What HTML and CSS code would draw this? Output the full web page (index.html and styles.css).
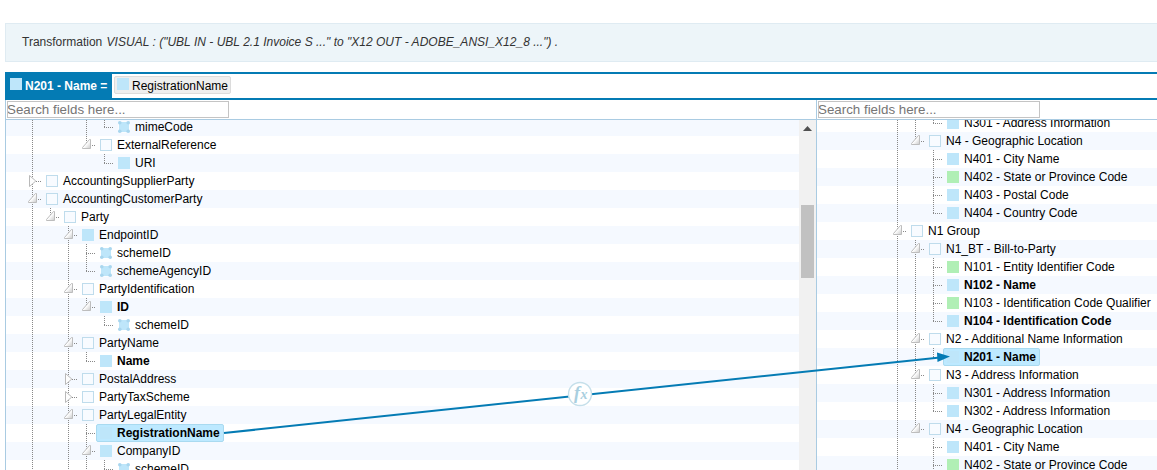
FILE: index.html
```html
<!DOCTYPE html>
<html lang="en">
<head>
<meta charset="utf-8">
<title>Transformation mapper</title>
<link rel="stylesheet" href="styles.css">
</head>
<body>
<svg class="defs" aria-hidden="true">
  <defs>
    <linearGradient id="shade" x1="0" y1="0" x2="1" y2="1"><stop offset=".5" stop-color="#fff"/><stop offset="1" stop-color="#c8c8c8"/></linearGradient>
    <symbol id="open" viewBox="0 0 12 12"><path d="M8.5 1.5h1v9h-8v-1z" fill="url(#shade)" stroke="#bdbdbd" stroke-linejoin="round"/></symbol>
    <symbol id="closed" viewBox="0 0 12 12"><path d="M2.5.5L8.8 6 2.5 11.5z" fill="#fdfdfd" stroke="#b9b9b9" stroke-linejoin="round"/></symbol>
    <symbol id="attr" viewBox="0 0 12 12"><path d="M1 1h10v10H1z" fill="#bee6fa"/><path d="M4 0h4v1H4zM4 11h4v1H4zM0 4h1v4H0zM11 4h1v4h-1z" fill="#fff" opacity=".6"/><g fill="#a9d6ee"><circle cx="1.8" cy="1.8" r="1.8"/><circle cx="10.2" cy="1.8" r="1.8"/><circle cx="1.8" cy="10.2" r="1.8"/><circle cx="10.2" cy="10.2" r="1.8"/></g></symbol>
  </defs>
</svg>
<div class="banner">Transformation <em>VISUAL : ("UBL IN - UBL 2.1 Invoice S ..." to "X12 OUT - ADOBE_ANSI_X12_8 ...") .</em></div>
<div class="formula">
  <div class="target"><b class="ic leaf"></b><span>N201 - Name =</span></div>
  <div class="token"><b class="ic leaf"></b><span>RegistrationName</span></div>
</div>
<main class="mapper">
  <section class="pane source">
    <div class="search"><input type="text" placeholder="Search fields here..."></div>
    <div class="view">
      <div class="tree">
        <div class="row"><i class="v"></i><i></i><i></i><i class="v"></i><i class="l"></i><svg class="ic"><use href="#attr"/></svg><span>mimeCode</span></div>
        <div class="row"><i class="v"></i><i></i><i></i><i class="up x"><svg><use href="#open"/></svg></i><b class="ic group"></b><span>ExternalReference</span></div>
        <div class="row"><i class="v"></i><i></i><i></i><i></i><i class="l"></i><b class="ic leaf"></b><span>URI</span></div>
        <div class="row"><i class="v x"><svg><use href="#closed"/></svg></i><b class="ic group"></b><span>AccountingSupplierParty</span></div>
        <div class="row"><i class="v x"><svg><use href="#open"/></svg></i><b class="ic group"></b><span>AccountingCustomerParty</span></div>
        <div class="row"><i class="v"></i><i class="up x"><svg><use href="#open"/></svg></i><b class="ic group"></b><span>Party</span></div>
        <div class="row"><i class="v"></i><i></i><i class="v x"><svg><use href="#open"/></svg></i><b class="ic leaf"></b><span>EndpointID</span></div>
        <div class="row"><i class="v"></i><i></i><i class="v"></i><i class="v t"></i><svg class="ic"><use href="#attr"/></svg><span>schemeID</span></div>
        <div class="row"><i class="v"></i><i></i><i class="v"></i><i class="l"></i><svg class="ic"><use href="#attr"/></svg><span>schemeAgencyID</span></div>
        <div class="row"><i class="v"></i><i></i><i class="v x"><svg><use href="#open"/></svg></i><b class="ic group"></b><span>PartyIdentification</span></div>
        <div class="row mapped"><i class="v"></i><i></i><i class="v"></i><i class="up x"><svg><use href="#open"/></svg></i><b class="ic leaf"></b><span>ID</span></div>
        <div class="row"><i class="v"></i><i></i><i class="v"></i><i></i><i class="l"></i><svg class="ic"><use href="#attr"/></svg><span>schemeID</span></div>
        <div class="row"><i class="v"></i><i></i><i class="v x"><svg><use href="#open"/></svg></i><b class="ic group"></b><span>PartyName</span></div>
        <div class="row mapped"><i class="v"></i><i></i><i class="v"></i><i class="l"></i><b class="ic leaf"></b><span>Name</span></div>
        <div class="row"><i class="v"></i><i></i><i class="v x"><svg><use href="#closed"/></svg></i><b class="ic group"></b><span>PostalAddress</span></div>
        <div class="row"><i class="v"></i><i></i><i class="v x"><svg><use href="#closed"/></svg></i><b class="ic group"></b><span>PartyTaxScheme</span></div>
        <div class="row"><i class="v"></i><i></i><i class="v x"><svg><use href="#open"/></svg></i><b class="ic group"></b><span>PartyLegalEntity</span></div>
        <div class="row mapped"><i class="v"></i><i></i><i class="v"></i><i class="v t"></i><div class="selected"><b class="ic leaf"></b><span>RegistrationName</span></div></div>
        <div class="row"><i class="v"></i><i></i><i class="v"></i><i class="v x"><svg><use href="#open"/></svg></i><b class="ic leaf"></b><span>CompanyID</span></div>
        <div class="row"><i class="v"></i><i></i><i class="v"></i><i class="v"></i><i class="l"></i><svg class="ic"><use href="#attr"/></svg><span>schemeID</span></div>
      </div>
      <div class="scrollbar"><div class="arrow"></div><div class="thumb"></div></div>
    </div>
  </section>
  <section class="pane dest">
    <div class="search"><input type="text" placeholder="Search fields here..."></div>
    <div class="view">
      <div class="tree">
        <div class="row"><i class="v"></i><i class="v"></i><i class="l"></i><b class="ic leaf"></b><span>N301 - Address Information</span></div>
        <div class="row"><i class="v"></i><i class="up x"><svg><use href="#open"/></svg></i><b class="ic group"></b><span>N4 - Geographic Location</span></div>
        <div class="row"><i class="v"></i><i></i><i class="v t"></i><b class="ic leaf"></b><span>N401 - City Name</span></div>
        <div class="row"><i class="v"></i><i></i><i class="v t"></i><b class="ic code"></b><span>N402 - State or Province Code</span></div>
        <div class="row"><i class="v"></i><i></i><i class="v t"></i><b class="ic leaf"></b><span>N403 - Postal Code</span></div>
        <div class="row"><i class="v"></i><i></i><i class="l"></i><b class="ic leaf"></b><span>N404 - Country Code</span></div>
        <div class="row"><i class="v x"><svg><use href="#open"/></svg></i><b class="ic group"></b><span>N1 Group</span></div>
        <div class="row"><i class="v"></i><i class="v x"><svg><use href="#open"/></svg></i><b class="ic group"></b><span>N1_BT - Bill-to-Party</span></div>
        <div class="row"><i class="v"></i><i class="v"></i><i class="v t"></i><b class="ic code"></b><span>N101 - Entity Identifier Code</span></div>
        <div class="row mapped"><i class="v"></i><i class="v"></i><i class="v t"></i><b class="ic leaf"></b><span>N102 - Name</span></div>
        <div class="row"><i class="v"></i><i class="v"></i><i class="v t"></i><b class="ic code"></b><span>N103 - Identification Code Qualifier</span></div>
        <div class="row mapped"><i class="v"></i><i class="v"></i><i class="l"></i><b class="ic leaf"></b><span>N104 - Identification Code</span></div>
        <div class="row"><i class="v"></i><i class="v x"><svg><use href="#open"/></svg></i><b class="ic group"></b><span>N2 - Additional Name Information</span></div>
        <div class="row mapped"><i class="v"></i><i class="v"></i><i class="l"></i><div class="selected"><b class="ic leaf"></b><span>N201 - Name</span></div></div>
        <div class="row"><i class="v"></i><i class="v x"><svg><use href="#open"/></svg></i><b class="ic group"></b><span>N3 - Address Information</span></div>
        <div class="row"><i class="v"></i><i class="v"></i><i class="v t"></i><b class="ic leaf"></b><span>N301 - Address Information</span></div>
        <div class="row"><i class="v"></i><i class="v"></i><i class="l"></i><b class="ic leaf"></b><span>N302 - Address Information</span></div>
        <div class="row"><i class="v"></i><i class="up x"><svg><use href="#open"/></svg></i><b class="ic group"></b><span>N4 - Geographic Location</span></div>
        <div class="row"><i class="v"></i><i></i><i class="v t"></i><b class="ic leaf"></b><span>N401 - City Name</span></div>
        <div class="row"><i class="v"></i><i></i><i class="v t"></i><b class="ic code"></b><span>N402 - State or Province Code</span></div>
      </div>
    </div>
  </section>
</main>
<svg class="links" width="1157" height="470" viewBox="0 0 1157 470">
  <path d="M224 433L940 357.5" stroke="#047bb4" stroke-width="2" fill="none"/>
  <path d="M937 352.5L950 356.5 937.5 362z" fill="#047bb4"/>
  <circle cx="580" cy="394" r="11.5" fill="#fff" stroke="#c5dfea" stroke-width="1.4"/>
  <text class="fx" x="574" y="399">f<tspan class="fx-x" dx="0.5">x</tspan></text>
</svg>
</body>
</html>
```
FILE: styles.css
```css
* { box-sizing: border-box; }
body {
  margin: 0;
  padding: 23px 0 0 5px;
  width: 1157px;
  height: 470px;
  overflow: hidden;
  display: flex;
  flex-direction: column;
  position: relative;
  background: #fff;
  color: #000;
  font: 12px/18px "Liberation Sans", Arial, sans-serif;
}
.defs { position: absolute; width: 0; height: 0; }
.banner {
  flex: none;
  height: 39px;
  padding: 9px 16px;
  border: 1px solid #dfebf2;
  border-right: 0;
  background: #edf5f9;
  color: #333;
}
.banner em { margin-left: 1px; letter-spacing: 0.01px; }
.formula {
  flex: none;
  display: flex;
  height: 28px;
  margin-top: 10px;
  border-top: 2px solid #047bb4;
  border-bottom: 2px solid #047bb4;
}
.ic { flex: none; display: block; width: 12px; height: 12px; margin-right: 5px; }
.leaf { background: #bee6fa; }
.code { background: #b0efb5; }
.group { border: 1px solid #bfdcec; background: #f8fbff; }
.target {
  display: flex;
  width: 107px;
  padding: 3px 0 0 5px;
  background: #047bb4;
  color: #fff;
  font-weight: bold;
}
.target .ic { margin: 1px 3px 0 0; }
.target span { white-space: nowrap; }
.token {
  display: flex;
  width: 117px;
  height: 18px;
  margin: 2px 0 0 2px;
  padding-left: 2px;
  border: 1px solid #dcdcdc;
  border-radius: 2px;
  background: #eee;
}
.token .ic { margin: 1px 3px 0 0; }
.mapper { flex: 1; display: flex; min-height: 0; }
.pane {
  display: flex;
  flex-direction: column;
  border-left: 1px solid #a9cbe2;
}
.source { width: 811px; }
.dest { flex: 1; min-width: 0; }
.search { height: 20px; padding: 1px 0 0 1px; border-bottom: 1px solid #a9cbe2; }
.search input {
  display: block;
  width: 222px;
  height: 17px;
  padding: 0;
  border: 1px solid #c4c4c4;
  background: #fff;
  font: 13.33px/15px "Liberation Sans", Arial, sans-serif;
  text-indent: -1px;
}
.search input::placeholder { color: #757575; }
.view { flex: 1; display: flex; min-height: 0; overflow: hidden; }
.tree { flex: 1; min-width: 0; margin-top: -2px; }
.dest .tree { margin-top: -6px; }
.row {
  display: flex;
  height: 18px;
  padding-left: 22px;
  align-items: center;
  white-space: nowrap;
}
.dest .row { padding-left: 76px; }
.source .row:nth-child(odd), .dest .row:nth-child(even) { background: #f5f9ff; }
.mapped { font-weight: bold; }
.row > i {
  --dots-v: repeating-linear-gradient(to bottom, #888 0 1px, transparent 1px 2px);
  --dots-h: repeating-linear-gradient(to right, #888 0 1px, transparent 1px 2px);
  flex: none;
  width: 18px;
  height: 18px;
  background-repeat: no-repeat;
}
.row > .v { background-image: var(--dots-v); background-size: 1px 18px; background-position: 4px 0; }
.row > .up { background-image: var(--dots-v), var(--dots-h); background-size: 1px 9px, 6px 1px; background-position: 4px 0, 8px 9px; }
.row > .v.x { background-image: var(--dots-v), var(--dots-h); background-size: 1px 18px, 6px 1px; background-position: 4px 0, 8px 9px; }
.row > .l { background-image: var(--dots-v), var(--dots-h); background-size: 1px 9px, 9px 1px; background-position: 4px 0, 4px 9px; }
.row > .v.t { background-image: var(--dots-v), var(--dots-h); background-size: 1px 18px, 9px 1px; background-position: 4px 0, 4px 9px; }
.x svg { display: block; width: 12px; height: 12px; margin: 2px 0 0 -1px; }
.x svg:has([href="#closed"]) { margin: 3px 0 0 -1px; }
.selected {
  display: flex;
  align-items: center;
  height: 18px;
  margin-left: -4px;
  padding: 0 3px;
  border: 1px solid #a9daf0;
  border-radius: 2px;
  background: #bde9ff;
}
.scrollbar { width: 17px; padding: 6px 2px 0; background: #f1f1f1; }
.arrow {
  width: 9px;
  height: 5px;
  margin-left: 2px;
  background: #505050;
  clip-path: polygon(50% 0, 100% 100%, 0 100%);
}
.thumb { height: 73px; margin-top: 74px; background: #c1c1c1; }
.links { position: absolute; left: 0; top: 0; }
.fx { font: italic bold 18px "Liberation Serif", serif; fill: #a9cfe0; }
.fx-x { font-size: 14px; }
```
